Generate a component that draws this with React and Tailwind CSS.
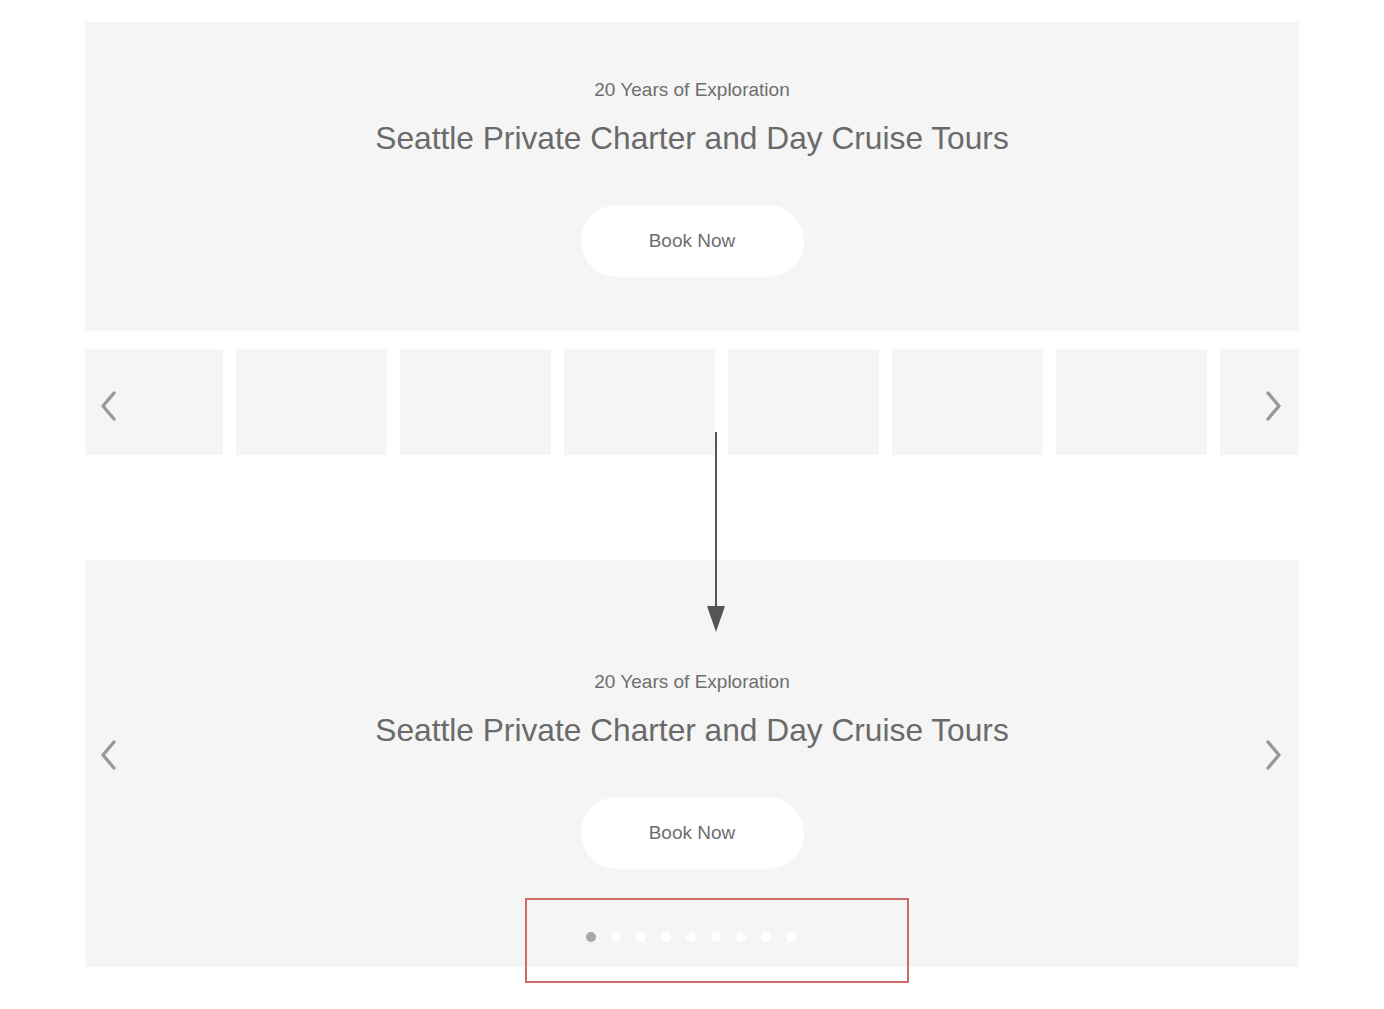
import React from 'react';

const font = { fontFamily: '"Liberation Sans", Arial, sans-serif' };

const Chevron = ({ dir = 'left', className = '' }) => (
  <svg width="20" height="30" viewBox="0 0 20 30" className={className} fill="none">
    {dir === 'left' ? (
      <path d="M15 2 L4 15 L15 28" stroke="#999" strokeWidth="3.4" strokeLinecap="round" strokeLinejoin="round" />
    ) : (
      <path d="M5 2 L16 15 L5 28" stroke="#999" strokeWidth="3.4" strokeLinecap="round" strokeLinejoin="round" />
    )}
  </svg>
);

const Hero = ({ top }) => (
  <div className={`flex flex-col items-center ${top}`}>
    <p className="text-[19px] leading-[22px] text-[#6e6e6e]">20 Years of Exploration</p>
    <h1 className="mt-[18px] text-[31.7px] leading-[38px] text-[#6a6a6a]">Seattle Private Charter and Day Cruise Tours</h1>
    <button className="mt-[48px] w-[223px] h-[72px] rounded-full bg-white text-[19px] text-[#6e6e6e]">Book Now</button>
  </div>
);

export default function App() {
  const thumbs = [0, 1, 2, 3, 4, 5];
  return (
    <div className="relative w-[1384px] h-[1009px] bg-white px-[85px] pt-[22px]" style={font}>
      {/* top banner */}
      <div className="h-[309px] bg-[#f5f5f5]">
        <Hero top="pt-[57px]" />
      </div>

      {/* thumbnail strip */}
      <div className="mt-[18px] flex gap-[13px] h-[106px]">
        <div className="w-[138px] bg-[#f5f5f5] flex items-center pl-[14px] pt-[8px]">
          <Chevron dir="left" />
        </div>
        {thumbs.map((i) => (
          <div key={i} className="w-[151px] bg-[#f5f5f5]" />
        ))}
        <div className="flex-1 bg-[#f5f5f5] flex items-center justify-end pr-[16px] pt-[8px]">
          <Chevron dir="right" />
        </div>
      </div>

      {/* bottom banner */}
      <div className="relative mt-[105px] h-[407px] bg-[#f5f5f5]">
        <Hero top="pt-[111px]" />
        <div className="mt-[63px] flex justify-center gap-[15px] pr-[3px]">
          <span className="w-[10px] h-[10px] rounded-full bg-[#a8a8a8]" />
          {[0, 1, 2, 3, 4, 5, 6, 7].map((i) => (
            <span key={i} className="w-[10px] h-[10px] rounded-full bg-white" />
          ))}
        </div>
        <div className="absolute left-[14px] top-[180px]">
          <Chevron dir="left" />
        </div>
        <div className="absolute right-[16px] top-[180px]">
          <Chevron dir="right" />
        </div>
      </div>

      {/* annotation arrow */}
      <div className="absolute left-[707px] top-[432px] flex flex-col items-center w-[18px]">
        <div className="w-[2px] h-[174px] bg-[#555]" />
        <svg width="18" height="26" viewBox="0 0 18 26">
          <polygon points="0,0 18,0 9,26" fill="#555" />
        </svg>
      </div>

      {/* annotation box */}
      <div className="absolute left-[525px] top-[898px] w-[384px] h-[85px] border-2 border-[#d06a6a]" />
    </div>
  );
}
